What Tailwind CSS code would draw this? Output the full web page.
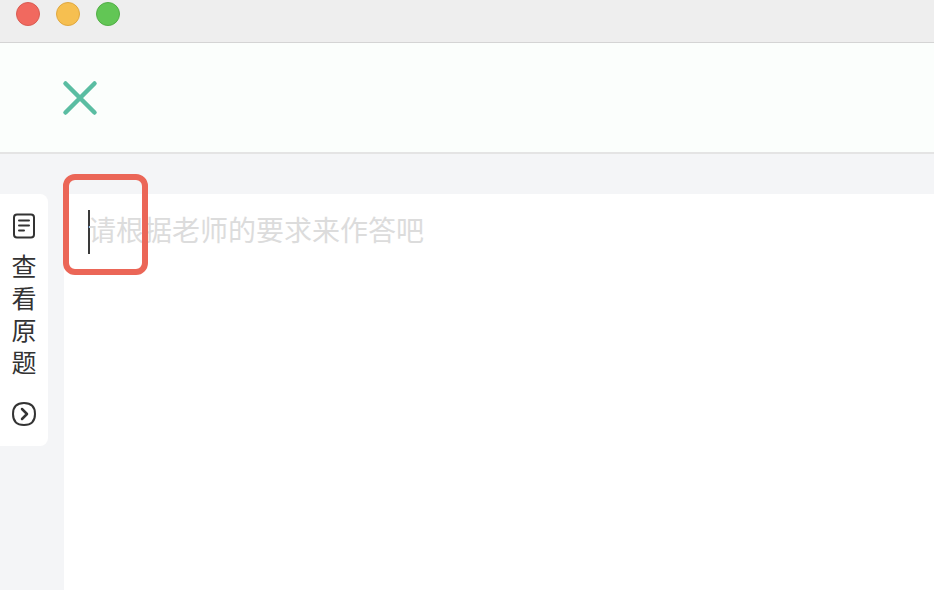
<!DOCTYPE html>
<html lang="zh">
  <head>
    <meta charset="UTF-8" />
    <title>作答</title>
    <script src="https://cdn.jsdelivr.net/npm/@tailwindcss/browser@4"></script>
  </head>
  <body class="w-[934px] h-[590px] overflow-hidden bg-[#f4f5f7] font-['Liberation_Sans','Noto_Sans_CJK_SC',sans-serif]">
    <!-- title bar -->
    <div class="h-[43px] bg-[#eeeeee] border-b border-[#d4d4d4] flex gap-4 pl-4 pt-[2px] items-start">
      <span class="w-6 h-6 rounded-full bg-[#f1695f] border border-[#d95c52]"></span>
      <span class="w-6 h-6 rounded-full bg-[#f6bf50] border border-[#e0a840]"></span>
      <span class="w-6 h-6 rounded-full bg-[#62c655] border border-[#52ae46]"></span>
    </div>

    <!-- header -->
    <div class="h-[111px] bg-[#fbfefc] border-b-2 border-[#e4e4e4] flex items-center pl-[62px]">
      <svg width="36" height="36" viewBox="0 0 36 36" fill="none" stroke="#5abda2" stroke-width="4.5" stroke-linecap="round">
        <path d="M3.5 3.5 L32.5 32.5 M32.5 3.5 L3.5 32.5" />
      </svg>
    </div>

    <!-- body -->
    <div class="flex pt-10 h-[436px]">
      <div class="w-12 h-[252px] bg-white rounded-r-lg flex flex-col items-center pt-[19px]">
        <svg width="24" height="26" viewBox="0 0 24 26" fill="none" stroke="#333333" stroke-width="2" stroke-linecap="round">
          <rect x="2" y="1.5" width="20" height="23" rx="3" />
          <path d="M7 7.5 H17 M7 12.5 H17 M7 17.5 H12" />
        </svg>
        <div class="w-[25px] mt-3 text-[25px] leading-8 text-[#333333] text-center">查看原题</div>
        <svg class="mt-[23px]" width="24" height="24" viewBox="0 0 24 24" fill="none" stroke="#333333" stroke-width="2" stroke-linecap="round" stroke-linejoin="round">
          <path d="M12 1 C19 1 23 5 23 12 C23 19 19 23 12 23 C5 23 1 19 1 12 C1 5 5 1 12 1 Z" />
          <path d="M10 7 L15 12 L10 17" stroke-width="2.5" />
        </svg>
      </div>

      <div class="relative ml-4 flex-1 bg-white pl-6 pt-[16px]">
        <div class="flex items-start">
          <span class="w-0.5 h-11 bg-[#3a3a3a]"></span>
          <span class="-ml-[2px] pt-[4px] text-[28px] leading-[36px] text-[#dcdcdc]">请根据老师的要求来作答吧</span>
        </div>
        <!-- red highlight -->
        <div class="absolute left-[-1px] top-[-20px] w-[85px] h-[101px] border-[6px] border-[#eb6657] rounded-xl"></div>
      </div>
    </div>
  </body>
</html>
